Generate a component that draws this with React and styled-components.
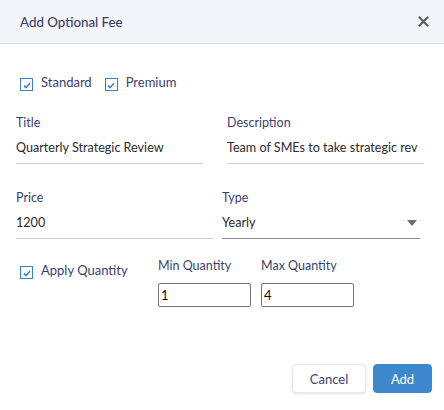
import styled, { createGlobalStyle } from 'styled-components';

const GlobalStyle = createGlobalStyle`
  html, body {
    margin: 0;
    padding: 0;
    background: #ffffff;
  }
  body {
    font-family: Lato, "Open Sans", sans-serif;
    -webkit-font-smoothing: antialiased;
  }
  * {
    box-sizing: border-box;
  }
`;

const Dialog = styled.div`
  width: 444px;
  height: 410px;
  display: flex;
  flex-direction: column;
  background: #fff;
`;

const Header = styled.div`
  height: 44px;
  display: flex;
  align-items: center;
  justify-content: space-between;
  padding: 0 14px 0 20px;
  background: #f4f5f8;
  border-bottom: 1px solid #dcdde1;
`;

const HeaderTitle = styled.h2`
  margin: 0;
  font-size: 13.3px;
  font-weight: 500;
  color: #3c3f68;
`;

const CloseButton = styled.button`
  border: 0;
  background: none;
  padding: 0;
  width: 12px;
  height: 12px;
  display: flex;
  cursor: pointer;
`;

const Body = styled.div`
  flex: 1;
  padding: 31px 16px 0;
  display: flex;
  flex-direction: column;
`;

const CheckRow = styled.div`
  display: flex;
  gap: 13px;
  padding-left: 4px;
`;

const CheckLabel = styled.label`
  display: flex;
  align-items: flex-start;
  gap: 8px;
  margin-top: ${p => p.$offset || 0}px;
  font-size: 13px;
  color: #3c3f68;
  line-height: 14px;
  cursor: pointer;
`;

const Box = styled.span`
  width: 13px;
  height: 13px;
  margin-top: 3px;
  padding-top: 2px;
  border: 1px solid #3d7fbe;
  background: #fff;
  display: flex;
  align-items: center;
  justify-content: center;
  flex-shrink: 0;
`;

const FieldRow = styled.div`
  display: flex;
  gap: ${p => p.$gap}px;
  margin-top: ${p => p.$top}px;
`;

const Field = styled.div`
  width: ${p => p.$width}px;
  display: flex;
  flex-direction: column;
`;

const Label = styled.span`
  font-size: 12.5px;
  line-height: 16px;
  color: #3c3f68;
`;

const LineInput = styled.div`
  display: flex;
  align-items: center;
  justify-content: space-between;
  height: 33px;
  padding-top: 1px;
  font-size: 12.6px;
  color: #2b2b2b;
  border-bottom: 1px solid ${p => (p.$select ? '#8a8a8a' : '#cfcfcf')};
  white-space: nowrap;
  overflow: hidden;
`;

const Caret = styled.span`
  width: 0;
  height: 0;
  margin-right: 3px;
  border-left: 5px solid transparent;
  border-right: 5px solid transparent;
  border-top: 6px solid #6f6f6f;
`;

const QtyRow = styled.div`
  display: flex;
  align-items: flex-start;
  margin-top: 19px;
  padding-left: 4px;
`;

const CheckCol = styled.div`
  width: 138px;
`;

const QtyFields = styled.div`
  display: flex;
  gap: 10px;
`;

const QtyField = styled.div`
  display: flex;
  flex-direction: column;
  gap: 9px;
`;

const BoxInput = styled.input`
  width: 93px;
  height: 24px;
  border: 1px solid #767676;
  border-radius: 2px;
  padding: 0 2px;
  font-family: Lato, sans-serif;
  font-size: 13px;
  color: #111;
  outline: none;
`;

const Footer = styled.div`
  display: flex;
  justify-content: flex-end;
  gap: 7px;
  padding: 0 12px 17px 0;
`;

const Button = styled.button`
  width: ${p => (p.$primary ? '59px' : '74px')};
  height: 29px;
  padding: 0;
  border-radius: 4px;
  font-family: Lato, sans-serif;
  font-size: 13px;
  cursor: pointer;
  border: 1px solid ${p => (p.$primary ? '#3d87cd' : '#e8e8e8')};
  background: ${p => (p.$primary ? '#3d87cd' : '#fff')};
  color: ${p => (p.$primary ? '#fff' : '#3c3f68')};
  box-shadow: ${p => (p.$primary ? 'none' : '0 1px 3px rgba(0,0,0,0.12)')};
`;

function Check({ children, offset }) {
  return (
    <CheckLabel $offset={offset}>
      <Box>
        <svg width="8" height="7" viewBox="0 0 8 7">
          <path d="M1 3.6 L3 5.6 L7 1.2" fill="none" stroke="#3d7fbe" strokeWidth="1.5" />
        </svg>
      </Box>
      {children}
    </CheckLabel>
  );
}

export default function App() {
  return (
    <>
      <GlobalStyle />
      <Dialog>
        <Header>
          <HeaderTitle>Add Optional Fee</HeaderTitle>
          <CloseButton aria-label="Close">
            <svg width="11" height="11" viewBox="0 0 11 11">
              <path d="M1.5 1.5 L9.5 9.5 M9.5 1.5 L1.5 9.5" stroke="#5e5e5e" strokeWidth="2.2" strokeLinecap="round" />
            </svg>
          </CloseButton>
        </Header>
        <Body>
          <CheckRow>
            <Check>Standard</Check>
            <Check>Premium</Check>
          </CheckRow>

          <FieldRow $gap={24} $top={24}>
            <Field $width={187}>
              <Label>Title</Label>
              <LineInput>Quarterly Strategic Review</LineInput>
            </Field>
            <Field $width={197}>
              <Label>Description</Label>
              <LineInput>Team of SMEs to take strategic rev</LineInput>
            </Field>
          </FieldRow>

          <FieldRow $gap={9} $top={26}>
            <Field $width={197}>
              <Label>Price</Label>
              <LineInput>1200</LineInput>
            </Field>
            <Field $width={198}>
              <Label>Type</Label>
              <LineInput $select>
                Yearly
                <Caret />
              </LineInput>
            </Field>
          </FieldRow>

          <QtyRow>
            <CheckCol>
              <Check offset={5}>Apply Quantity</Check>
            </CheckCol>
            <QtyFields>
              <QtyField>
                <Label>Min Quantity</Label>
                <BoxInput defaultValue="1" />
              </QtyField>
              <QtyField>
                <Label>Max Quantity</Label>
                <BoxInput defaultValue="4" />
              </QtyField>
            </QtyFields>
          </QtyRow>
        </Body>
        <Footer>
          <Button>Cancel</Button>
          <Button $primary>Add</Button>
        </Footer>
      </Dialog>
    </>
  );
}
